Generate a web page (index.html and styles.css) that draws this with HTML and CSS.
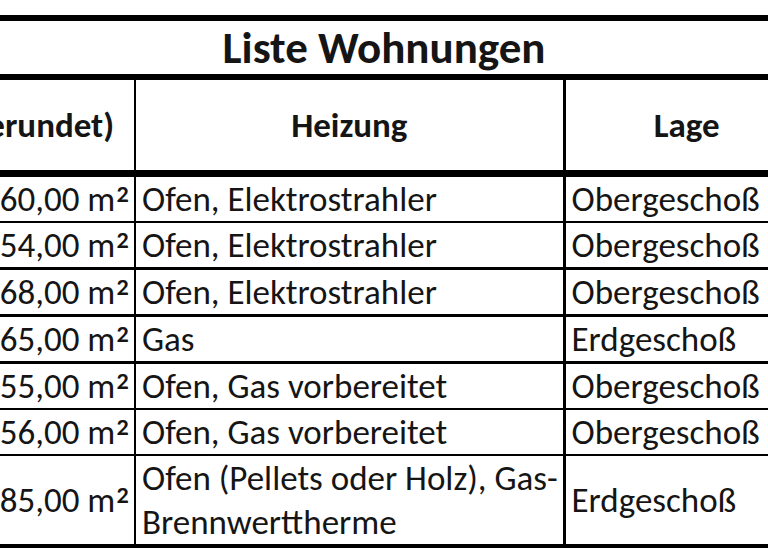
FILE: index.html
```html
<!DOCTYPE html>
<html lang="de">
<head>
<meta charset="utf-8">
<title>Liste Wohnungen</title>
<link rel="stylesheet" href="styles.css">
</head>
<body>
<div class="sheet">
  <table class="list">
    <colgroup>
      <col class="c-area">
      <col class="c-heat">
      <col class="c-loc">
    </colgroup>
    <thead>
      <tr class="title-row"><th colspan="3">Liste Wohnungen</th></tr>
      <tr class="head-row">
        <th class="area">(gerundet)</th>
        <th class="heat">Heizung</th>
        <th class="loc">Lage</th>
      </tr>
    </thead>
    <tbody>
      <tr class="r-thin"><td class="area">60,00 m<span class="sq">²</span></td><td class="heat">Ofen, Elektrostrahler</td><td class="loc">Obergeschoß</td></tr>
      <tr class="r-mid"><td class="area">54,00 m<span class="sq">²</span></td><td class="heat">Ofen, Elektrostrahler</td><td class="loc">Obergeschoß</td></tr>
      <tr class="r-mid"><td class="area">68,00 m<span class="sq">²</span></td><td class="heat">Ofen, Elektrostrahler</td><td class="loc">Obergeschoß</td></tr>
      <tr class="r-mid"><td class="area">65,00 m<span class="sq">²</span></td><td class="heat">Gas</td><td class="loc">Erdgeschoß</td></tr>
      <tr class="r-thin"><td class="area">55,00 m<span class="sq">²</span></td><td class="heat">Ofen, Gas vorbereitet</td><td class="loc">Obergeschoß</td></tr>
      <tr class="r-thin"><td class="area">56,00 m<span class="sq">²</span></td><td class="heat">Ofen, Gas vorbereitet</td><td class="loc">Obergeschoß</td></tr>
      <tr class="r-last"><td class="area">85,00 m<span class="sq">²</span></td><td class="heat">Ofen (Pellets oder Holz), Gas-<br>Brennwerttherme</td><td class="loc">Erdgeschoß</td></tr>
    </tbody>
  </table>
</div>
</body>
</html>
```
FILE: styles.css
```css
html, body {
  margin: 0;
  padding: 0;
  background: #ffffff;
}

.sheet {
  width: 768px;
  height: 560px;
  overflow: hidden;
  padding-top: 15px;
  box-sizing: border-box;
}

.list {
  border-collapse: collapse;
  table-layout: fixed;
  width: 848px;
  margin-left: -40px;
  font-family: Carlito, Lato, "Liberation Sans", sans-serif;
  color: #151515;
}

.c-area { width: 175px; }
.c-heat { width: 429px; }
.c-loc  { width: 244px; }

.list th,
.list td {
  padding: 0;
  white-space: nowrap;
  overflow: hidden;
}

.title-row th {
  height: 53px;
  line-height: 53px;
  font-size: 45px;
  font-weight: 700;
  text-align: center;
  vertical-align: middle;
  border-top: 6px solid #000;
  border-bottom: 6px solid #000;
}

.head-row th {
  height: 90px;
  font-size: 35px;
  font-weight: 700;
  text-align: center;
  vertical-align: middle;
  border-bottom: 7px solid #000;
}

.head-row th.area {
  text-align: right;
  padding-right: 23px;
}

.list td {
  font-size: 35px;
  line-height: 44px;
  height: 44px;
  vertical-align: middle;
}

.sq {
  font-size: 1.25em;
  line-height: 0;
  vertical-align: -0.22em;
}

.list .area {
  text-align: right;
  padding-right: 4px;
  border-right: 2px solid #000;
}

.list td.heat {
  text-align: left;
  padding-left: 6px;
  border-right: 3px solid #000;
}

.list th.heat {
  border-right: 3px solid #000;
}

.list td.loc {
  text-align: left;
  padding-left: 6px;
}

.r-thin td { border-bottom: 2px solid #000; }
.r-mid td  { border-bottom: 3px solid #000; }
.r-last td { border-bottom: 4px solid #000; }
```
